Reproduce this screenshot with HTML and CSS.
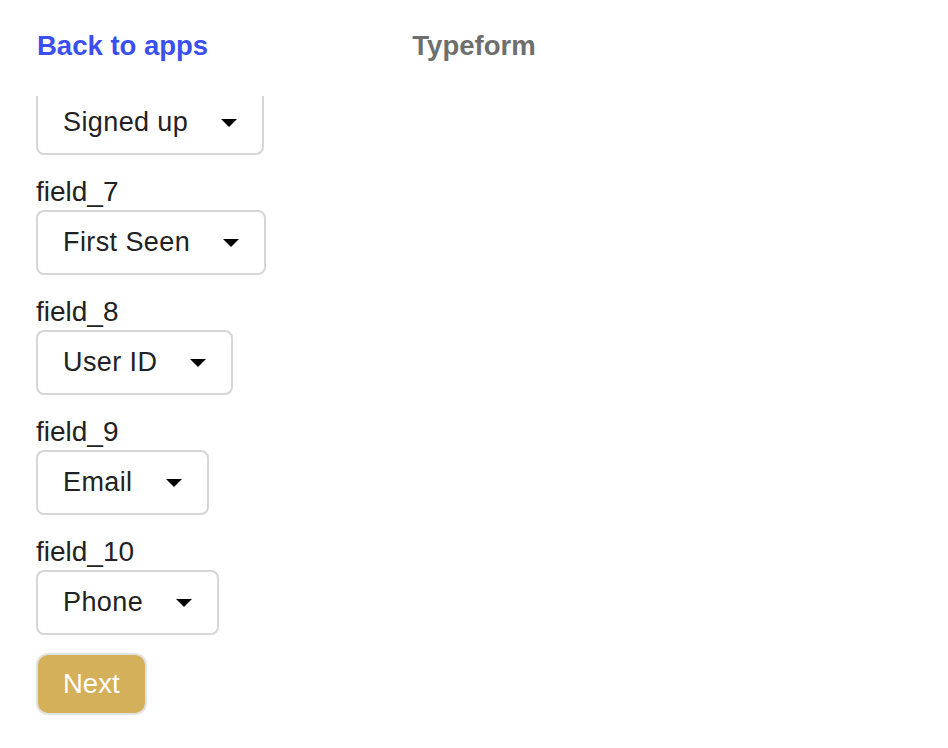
FILE: index.html
```html
<!DOCTYPE html>
<html lang="en">
<head>
<meta charset="utf-8">
<title>Typeform</title>
<link rel="stylesheet" href="styles.css">
</head>
<body>
<div class="page">
  <header class="topbar">
    <a class="back" href="#">Back to apps</a>
    <div class="title">Typeform</div>
    <div class="spacer"></div>
  </header>
  <main class="viewport">
    <form class="form">
      <div class="select"><span class="value">Signed up</span><svg class="caret" width="16" height="8" viewBox="0 0 16 8"><polygon points="0,0 16,0 8,8" fill="#000"/></svg></div>

      <label class="label">field_7</label>
      <div class="select"><span class="value">First Seen</span><svg class="caret" width="16" height="8" viewBox="0 0 16 8"><polygon points="0,0 16,0 8,8" fill="#000"/></svg></div>

      <label class="label">field_8</label>
      <div class="select"><span class="value">User ID</span><svg class="caret" width="16" height="8" viewBox="0 0 16 8"><polygon points="0,0 16,0 8,8" fill="#000"/></svg></div>

      <label class="label">field_9</label>
      <div class="select"><span class="value">Email</span><svg class="caret" width="16" height="8" viewBox="0 0 16 8"><polygon points="0,0 16,0 8,8" fill="#000"/></svg></div>

      <label class="label">field_10</label>
      <div class="select last"><span class="value">Phone</span><svg class="caret" width="16" height="8" viewBox="0 0 16 8"><polygon points="0,0 16,0 8,8" fill="#000"/></svg></div>

      <button type="button" class="next">Next</button>
    </form>
  </main>
</div>
</body>
</html>
```

FILE: styles.css
```css
html, body {
  margin: 0;
  padding: 0;
  background: #ffffff;
}

body {
  font-family: "Liberation Sans", Arial, sans-serif;
  color: #222222;
}

.page {
  display: flex;
  flex-direction: column;
  height: 748px;
  overflow: hidden;
}

.topbar {
  flex: 0 0 96px;
  box-sizing: border-box;
  height: 96px;
  padding: 30px 37px 0 37px;
  display: grid;
  grid-template-columns: 1fr auto 1fr;
  align-items: start;
  background: #ffffff;
  line-height: 32px;
  font-size: 27.5px;
}

.back {
  color: #3b4ef2;
  text-decoration: none;
  font-weight: bold;
  justify-self: start;
}

.title {
  color: #6e6e6e;
  font-weight: bold;
}

.viewport {
  flex: 1 1 auto;
  overflow: hidden;
}

.form {
  margin-top: -6px;
  padding-left: 36px;
  display: flex;
  flex-direction: column;
  align-items: flex-start;
}

.label {
  display: block;
  font-size: 28px;
  line-height: 32px;
  margin-bottom: 2px;
  color: #222222;
}

.select {
  box-sizing: border-box;
  height: 65px;
  display: inline-flex;
  align-items: center;
  gap: 33px;
  padding: 0 25px;
  border: 2px solid #d6d6d6;
  border-radius: 8px;
  font-size: 27px;
  letter-spacing: 0.4px;
  color: #222222;
  margin-bottom: 21px;
}

.select.last {
  margin-bottom: 18px;
}

.caret {
  display: block;
  flex: 0 0 auto;
}

.next {
  box-sizing: border-box;
  height: 62px;
  padding: 0 25px;
  border: 2px solid #e2e2e2;
  border-radius: 12px;
  background: #d4b05b;
  color: #ffffff;
  font-family: "Liberation Sans", Arial, sans-serif;
  font-size: 27.5px;
}
```
